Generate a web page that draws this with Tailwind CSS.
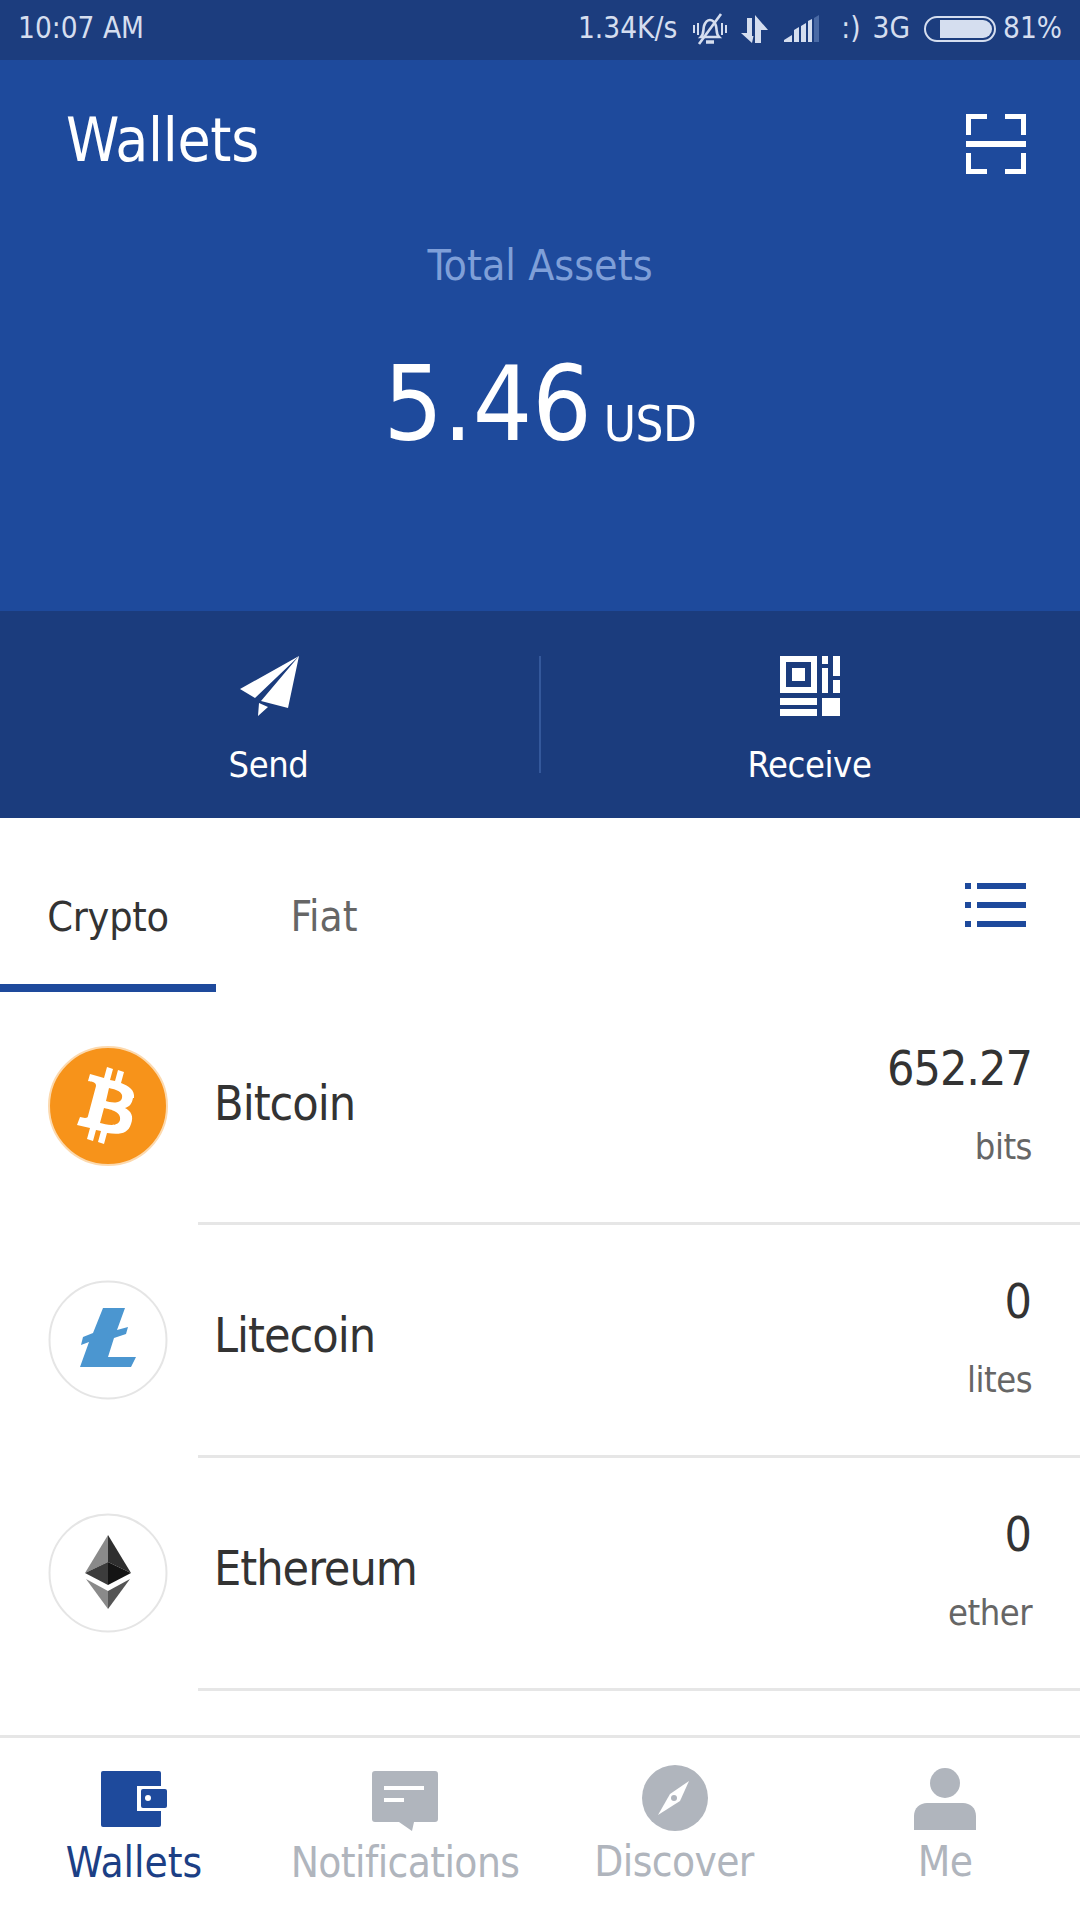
<!DOCTYPE html>
<html><head><meta charset="utf-8"><script src="https://cdn.jsdelivr.net/npm/@tailwindcss/browser@4"></script></head>
<body class="m-0 bg-white">
<div class="w-[1080px] h-[1920px] overflow-hidden flex flex-col bg-white font-['DejaVu_Sans_Condensed','DejaVu_Sans',sans-serif] [font-stretch:condensed]">
  <div class="h-[60px] bg-[#1c3d7e] flex items-center pl-[18px] pr-[18px] text-[#d5deef] text-[29.5px] leading-none">
    <span class="-translate-y-[1px]">10:07 AM</span>
    <div class="ml-auto flex items-center -translate-y-[1px]">
      <span>1.34K/s</span>
      <svg class="ml-[15px]" width="36" height="34" viewBox="0 0 36 34" fill="none" stroke="#d5deef" stroke-width="2.6"><path d="M9 25c3-3 2-7 3-11 1-3 3-6 6-6s5 3 6 6c1 4 0 8 3 11z"/><path d="M14 30h8" stroke-width="3.5"/><path d="M7 32 29 2"/><path d="M2 13v8M6 11v12M30 11v12M34 13v8" stroke-width="2"/></svg>
      <svg class="ml-[13px]" width="27" height="30" viewBox="0 0 27 30" fill="#d5deef"><path d="M6 4h5v18h1.500l-1.500 7L0 19h6zM14 29V1l13 15h-7v13z"/></svg>
      <svg class="ml-[16px]" width="36" height="28" viewBox="0 0 36 28"><path d="M0 27v-2l8-5v7zM10 27V15l5-3v15zM17 27V11l5-3v19zM24 27V6l4-2v23z" fill="#d5deef"/><path d="M30 27V3l5-3v27z" fill="#4a6aa5"/></svg>
      <span class="ml-[21px]">:)</span>
      <span class="ml-[12px]">3G</span>
      <div class="ml-[14px] w-[72px] h-[26px] rounded-full border-2 border-[#d5deef] p-[2px] flex"><div class="ml-[12px] flex-1 bg-[#d5deef] rounded-r-full"></div></div>
      <span class="ml-[7px]">81%</span>
    </div>
  </div>
  <div class="h-[551px] bg-[#1e4a9c] flex flex-col relative">
    <div class="flex justify-between items-start pl-[66px] pr-[54px]">
      <span class="text-white text-[60px] leading-none mt-[50px] tracking-[-0.3px]">Wallets</span>
      <svg class="mt-[54px]" width="60" height="60" viewBox="0 0 60 60" fill="#fff"><path d="M0 0h21v5H5v16H0zM39 0h21v21h-5V5H39zM0 27h60v6H0zM0 39h5v16h16v5H0zM55 39h5v21H39v-5h16z"/></svg>
    </div>
    <div class="text-center text-[#7f9fd8] text-[42.5px] leading-none mt-[71px]">Total Assets</div>
    <div class="flex justify-center items-baseline text-white mt-[64px]">
      <span class="text-[104px] leading-none">5.46</span>
      <span class="text-[49px] leading-none ml-[12px] tracking-[-0.5px] translate-y-[1px]">USD</span>
    </div>
  </div>
  <div class="h-[207px] bg-[#1b3c7d] flex items-stretch text-white text-[36px] leading-none tracking-[-0.4px]">
    <div class="flex-1 flex flex-col items-center pt-[45px]">
      <svg class="-translate-x-[1px]" width="60" height="60" viewBox="0 0 60 60" fill="#fff"><path d="M60 0 1 33l15 9zM60 0 22 45l27 7zM20 47l-1 13 10-9z"/></svg>
      <span class="mt-[31px] -translate-x-[1px]">Send</span>
    </div>
    <div class="w-[2px] h-[117px] mt-[45px] bg-[#34589b]"></div>
    <div class="flex-1 flex flex-col items-center pt-[45px]">
      <svg class="-translate-x-[1px]" width="60" height="60" viewBox="0 0 60 60"><path fill="#fff" fill-rule="evenodd" d="M0 0h37v37H0zM6 6v25h25V6zM12 12h13v13H12zM42 0h6v8h-6zM53 0h7v20h-7zM42 12h6v25h-6zM53 24h7v13h-7zM0 42h37v7H0zM0 53h37v7H0zM42 42h18v18H42z"/></svg>
      <span class="mt-[31px] -translate-x-[1px]">Receive</span>
    </div>
  </div>
  <div class="h-[174px] flex items-stretch leading-none">
    <div class="w-[216px] flex items-center justify-center border-b-[8px] border-[#1e4a9c] text-[#333333] text-[41px] tracking-[-0.3px] pt-[32px]">Crypto</div>
    <div class="w-[216px] flex items-center justify-center text-[#666666] text-[42px] pt-[24px]">Fiat</div>
    <svg class="ml-auto mr-[54px] mt-[65px]" width="61" height="44" viewBox="0 0 61 44" fill="#1e4a9c"><path d="M0 0h6v6H0zM12 0h49v6H12zM0 19h6v6H0zM12 19h49v6H12zM0 38h6v6H0zM12 38h49v6H12z"/></svg>
  </div>
  <div class="flex-1 min-h-0 flex flex-col">
    <div class="h-[230px] flex">
      <div class="w-[214px] shrink-0 pl-[48px] pt-[54px]">
        <svg width="120" height="120" viewBox="0 0 120 120"><circle cx="60" cy="60" r="59" fill="#f7931a" stroke="#fcd9ae" stroke-width="2"/><path transform="translate(3 0)" fill="#fff" fill-rule="evenodd" d="M83 52c1-8-5-12-13-15l3-11-6-2-3 11-5-1 3-11-6-2-3 11-14-4-2 7s5 1 5 1c3 1 3 3 3 4l-8 30c0 1-1 2-3 2l-5-1-3 8 13 3-3 11 6 2 3-11 5 1-3 11 6 2 3-11c12 2 21 1 24-9 3-8 0-13-6-16 4-1 7-4 8-10zM69 74c-2 8-15 4-20 3l4-15c4 1 18 3 16 12zM71 52c-2 7-13 4-16 3l3-13c4 1 15 3 13 10z"/></svg>
      </div>
      <div class="flex-1 flex items-center text-[48px] text-[#333333] leading-none pb-[8px] tracking-[-1px]">Bitcoin</div>
      <div class="pr-[48px] flex flex-col items-end pt-[52px]"><span class="text-[48px] text-[#333333] leading-none tracking-[-1px]">652.27</span><span class="text-[36px] text-[#666666] leading-none mt-[37px] tracking-[-0.5px]">bits</span></div>
    </div>
    <div class="h-[3px] ml-[198px] bg-[#e6e6e6]"></div>
    <div class="h-[230px] flex">
      <div class="w-[214px] shrink-0 pl-[48px] pt-[55px]">
        <svg width="120" height="120" viewBox="0 0 120 120"><circle cx="60" cy="60" r="58.500" fill="#fff" stroke="#e5e5e5" stroke-width="2"/><path fill="#4b96d0" d="M55 28H77L69 50 80 47 78 54 66 58 60 77H88L83 87H32L41 62 33 65 35 57 45 53z"/></svg>
      </div>
      <div class="flex-1 flex items-center text-[48px] text-[#333333] leading-none pb-[10px] tracking-[-1px]">Litecoin</div>
      <div class="pr-[48px] flex flex-col items-end pt-[52px]"><span class="text-[48px] text-[#333333] leading-none">0</span><span class="text-[36px] text-[#666666] leading-none mt-[37px] tracking-[-0.5px]">lites</span></div>
    </div>
    <div class="h-[3px] ml-[198px] bg-[#e6e6e6]"></div>
    <div class="h-[230px] flex">
      <div class="w-[214px] shrink-0 pl-[48px] pt-[55px]">
        <svg width="120" height="120" viewBox="0 0 120 120"><circle cx="60" cy="60" r="58.500" fill="#fff" stroke="#e5e5e5" stroke-width="2"/><path fill="#8a8a8a" d="M60 22 37 60l23-11z"/><path fill="#2f2f2f" d="M60 22l23 38-23-11z"/><path fill="#3c3c3c" d="M37 60l23-11v23z"/><path fill="#141414" d="M83 60 60 49v23z"/><path fill="#8a8a8a" d="M38 66l22 12v18z"/><path fill="#555" d="M82 66 60 78v18z"/></svg>
      </div>
      <div class="flex-1 flex items-center text-[48px] text-[#333333] leading-none pb-[10px] tracking-[-1px]">Ethereum</div>
      <div class="pr-[48px] flex flex-col items-end pt-[52px]"><span class="text-[48px] text-[#333333] leading-none">0</span><span class="text-[36px] text-[#666666] leading-none mt-[37px] tracking-[-0.5px]">ether</span></div>
    </div>
    <div class="h-[3px] ml-[198px] bg-[#e6e6e6]"></div>
  </div>
  <div class="h-[185px] border-t-[3px] border-[#e6e6e6] grid grid-cols-4 text-[42px] leading-none text-[#b0b5bd] tracking-[-0.6px]">
    <div class="flex flex-col items-center pt-[28px] text-[#1c3f85]">
      <svg width="68" height="56" viewBox="0 0 68 56" class="mt-[5px]"><rect width="60" height="56" rx="2" fill="#1e4a9c"/><path fill="#fff" d="M36 15h32v25H36z"/><rect x="40" y="18" width="26" height="19" rx="2" fill="#1e4a9c"/><circle cx="47" cy="27" r="3" fill="#fff"/></svg>
      <span class="mt-[15px] tracking-[0px] -translate-x-[1px]">Wallets</span>
    </div>
    <div class="flex flex-col items-center pt-[33px]">
      <svg width="66" height="60" viewBox="0 0 66 60"><path fill="#b0b5bd" d="M3 0h60a3 3 0 0 1 3 3v45a3 3 0 0 1-3 3H42l-2 9-13-9H3a3 3 0 0 1-3-3V3a3 3 0 0 1 3-3z"/><path fill="#fff" d="M12 15h40v4H12zM12 27h20v4H12z"/></svg>
      <span class="mt-[11px]">Notifications</span>
    </div>
    <div class="flex flex-col items-center pt-[27px]">
      <svg width="66" height="66" viewBox="0 0 66 66"><circle cx="33" cy="33" r="33" fill="#b0b5bd"/><path fill="#fff" d="M47 16 38 36 16 50l12-21z"/><circle cx="32" cy="33" r="3" fill="#b0b5bd"/></svg>
      <span class="mt-[10px] -translate-x-[1px]">Discover</span>
    </div>
    <div class="flex flex-col items-center pt-[28px]">
      <svg width="62" height="64" viewBox="0 0 62 64" class="mt-[2px]"><ellipse cx="31" cy="15" rx="15" ry="15" fill="#b0b5bd"/><path fill="#b0b5bd" d="M0 62V48c0-8 6-13 13-13h36c7 0 13 5 13 13v14z"/></svg>
      <span class="mt-[9px]">Me</span>
    </div>
  </div>
</div>
</body></html>
